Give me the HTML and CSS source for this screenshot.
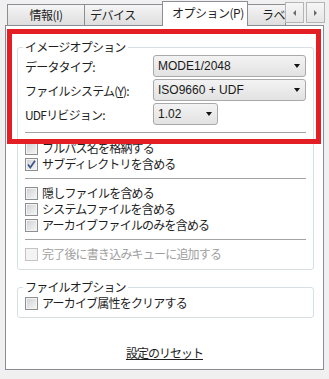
FILE: index.html
```html
<!DOCTYPE html>
<html lang="ja">
<head>
<meta charset="UTF-8" />
<meta name="viewport" content="width=device-width, initial-scale=1" />
<title>オプション</title>
<link rel="stylesheet" href="styles.css">
</head>
<body>

<div class="tabs">
  <div class="tab tab-info">情報(I)</div>
  <div class="tab tab-device">デバイス</div>
  <div class="tab tab-active">オプション(P)</div>
  <div class="tab tab-label">ラベ</div>
  <div class="scroll-btn"><span class="tri-left"></span></div>
  <div class="scroll-btn next"><span class="tri-right"></span></div>
</div>

<div class="panel">
  <fieldset class="group">
    <legend>イメージオプション</legend>
    <div class="field-row">
      <span class="label">データタイプ:</span>
      <div class="select"><span>MODE1/2048</span><span class="arrow"></span></div>
    </div>
    <div class="field-row">
      <span class="label">ファイルシステム(<u>Y</u>):</span>
      <div class="select"><span>ISO9660 + UDF</span><span class="arrow"></span></div>
    </div>
    <div class="field-row">
      <span class="label">UDFリビジョン:</span>
      <div class="select short"><span>1.02</span><span class="arrow"></span></div>
    </div>

    <div class="sep first"></div>

    <div class="check"><span class="box"></span>フルパス名を格納する</div>
    <div class="check"><span class="box checked"><svg width="11" height="11" viewBox="0 0 11 11"><polyline points="2,5.5 4.3,8.5 9,1.8" fill="none" stroke="#3d5288" stroke-width="1.7"/></svg></span>サブディレクトリを含める</div>

    <div class="sep"></div>

    <div class="check"><span class="box"></span>隠しファイルを含める</div>
    <div class="check"><span class="box"></span>システムファイルを含める</div>
    <div class="check"><span class="box"></span>アーカイブファイルのみを含める</div>

    <div class="sep"></div>

    <div class="check disabled"><span class="box"></span>完了後に書き込みキューに追加する</div>
  </fieldset>

  <fieldset class="group group-file">
    <legend>ファイルオプション</legend>
    <div class="check"><span class="box"></span>アーカイブ属性をクリアする</div>
  </fieldset>

  <div class="reset"><a href="#">設定のリセット</a></div>

  <div class="red-mark"></div>
</div>

</body>
</html>
```

FILE: styles.css
```css
  body {
    margin: 0;
    padding: 0;
    width: 329px;
    height: 379px;
    overflow: hidden;
    background-color: #f0f0f0;
    font-family: "Noto Sans CJK JP", sans-serif;
    font-size: 12px;
    color: #1e1e1e;
  }

  /* tab strip */
  .tabs {
    display: flex;
    align-items: flex-end;
    height: 25px;
    padding-left: 7px;
  }
  .tab {
    box-sizing: border-box;
    height: 21px;
    margin-left: -1px;
    border: 1px solid #8c8e94;
    border-bottom: none;
    background: linear-gradient(#f5f5f5, #dedede);
    line-height: 20px;
    white-space: nowrap;
    overflow: hidden;
    letter-spacing: -0.5px;
  }
  .tab-info {
    margin-left: 0;
    width: 78px;
    text-align: center;
  }
  .tab-device {
    width: 79px;
    padding-left: 5px;
  }
  .tab-active {
    position: relative;
    z-index: 1;
    width: 86px;
    height: 25px;
    margin-bottom: -1px;
    padding-left: 9px;
    background: #fff;
    line-height: 22px;
  }
  .tab-label {
    width: 39px;
    padding-left: 14px;
  }
  .scroll-btn {
    box-sizing: border-box;
    align-self: flex-start;
    width: 19px;
    height: 21px;
    margin-top: 2px;
    margin-left: -1px;
    border: 1px solid #b5b5b5;
    background: linear-gradient(#f6f6f6, #e6e6e6);
    display: flex;
    align-items: center;
    justify-content: center;
  }
  .scroll-btn.next {
    margin-left: 2px;
  }
  .tri-left {
    border-top: 3px solid transparent;
    border-bottom: 3px solid transparent;
    border-right: 3px solid #6a6a6a;
  }
  .tri-right {
    border-top: 3px solid transparent;
    border-bottom: 3px solid transparent;
    border-left: 3px solid #6a6a6a;
  }

  /* content panel */
  .panel {
    position: relative;
    box-sizing: border-box;
    width: 319px;
    height: 345px;
    margin-left: 5px;
    border: 1px solid #898c95;
    background: #fff;
  }
  .group {
    margin: 13px 9px 0 11px;
    padding: 0 7px 7px 7px;
    min-width: 0;
    border: 1px solid #d5dfe5;
    border-radius: 3px;
  }
  .group legend {
    padding: 0 2px;
    margin-left: -2px;
    line-height: 16px;
    letter-spacing: -0.8px;
  }
  .group-file {
    margin-top: 9px;
    padding-bottom: 6px;
  }

  .field-row {
    display: grid;
    grid-template-columns: 128px auto;
    align-items: center;
    height: 22px;
    margin-top: 2px;
  }
  .field-row:first-of-type {
    margin-top: 0;
  }
  .label {
    letter-spacing: -0.8px;
    white-space: nowrap;
  }
  .select {
    box-sizing: border-box;
    width: 153px;
    height: 22px;
    padding: 0 5px 0 4px;
    border: 1px solid #a9a9a9;
    border-radius: 3px;
    background: linear-gradient(#f3f3f3, #e2e2e2);
    display: flex;
    align-items: center;
    justify-content: space-between;
    font-family: "Liberation Sans", sans-serif;
    font-size: 12px;
    color: #1a1a1a;
  }
  .select.short {
    width: 65px;
  }
  .arrow {
    width: 0;
    height: 0;
    border-left: 3.5px solid transparent;
    border-right: 3.5px solid transparent;
    border-top: 4px solid #111;
  }

  .sep {
    height: 1px;
    margin: 6px 0;
    background: #a3a3a3;
  }
  .sep.first {
    margin: 7px 0;
  }

  .check {
    display: flex;
    align-items: center;
    gap: 4px;
    height: 16px;
    line-height: 16px;
    letter-spacing: -0.8px;
    white-space: nowrap;
  }
  .box {
    box-sizing: border-box;
    width: 13px;
    height: 13px;
    flex: none;
    border: 1px solid #8e8f8f;
    background: linear-gradient(135deg, #cfd0d2, #f7f7f7);
    box-shadow: inset 0 0 0 1px #f3f3f3;
    display: flex;
    align-items: center;
    justify-content: center;
  }
  .box svg {
    display: block;
  }
  .check.disabled {
    color: #a0a0a0;
  }
  .check.disabled .box {
    border-color: #c4c4c4;
    background: #f4f4f4;
    box-shadow: none;
  }

  .reset {
    margin-top: 27px;
    line-height: 16px;
    text-align: center;
    letter-spacing: -1px;
  }
  .reset a {
    color: #1e1e1e;
    text-decoration: underline;
  }

  /* annotation frame drawn over the image options */
  .red-mark {
    position: absolute;
    left: 1px;
    top: 3px;
    width: 314px;
    height: 115px;
    box-sizing: border-box;
    border: 5px solid #e31e24;
  }
```
